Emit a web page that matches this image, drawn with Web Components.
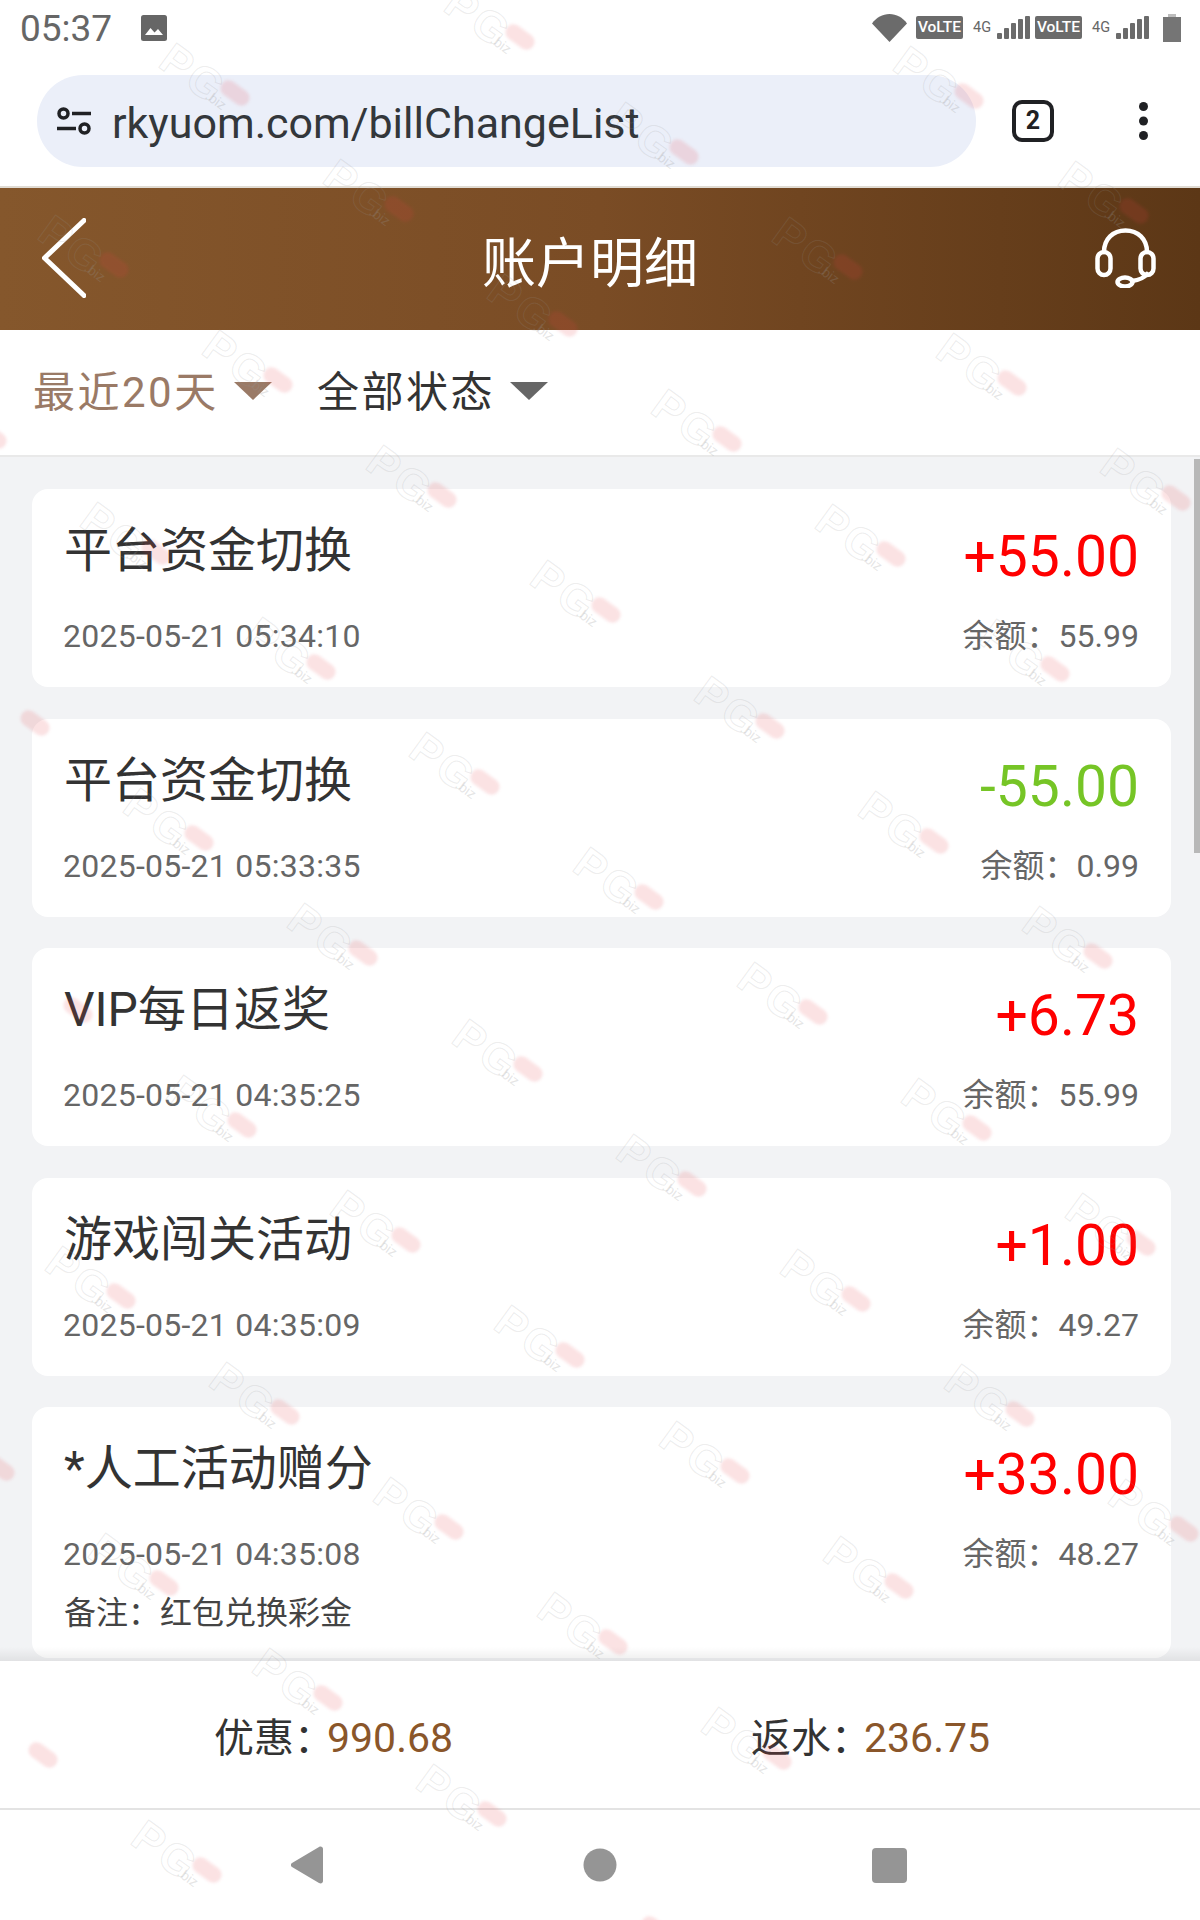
<!DOCTYPE html>
<html lang="zh">
<head>
<meta charset="utf-8">
<title>账户明细</title>
<style>
  html, body { margin: 0; padding: 0; background: #fff; }
  body {
    position: relative;
    width: 1200px;
    height: 1920px;
    overflow: hidden;
    display: flex;
    flex-direction: column;
    font-family: Roboto, "Noto Sans CJK SC", sans-serif;
  }
</style>
</head>
<body>
  <status-bar></status-bar>
  <browser-bar>rkyuom.com/billChangeList</browser-bar>
  <page-header>账户明细</page-header>
  <filter-bar></filter-bar>
  <bill-list>
    <bill-card>
      平台资金切换
      <span slot="amount">+55.00</span>
      <span slot="date">2025-05-21 05:34:10</span>
      <span slot="balance">余额：55.99</span>
    </bill-card>
    <bill-card kind="minus">
      平台资金切换
      <span slot="amount">-55.00</span>
      <span slot="date">2025-05-21 05:33:35</span>
      <span slot="balance">余额：0.99</span>
    </bill-card>
    <bill-card>
      VIP每日返奖
      <span slot="amount">+6.73</span>
      <span slot="date">2025-05-21 04:35:25</span>
      <span slot="balance">余额：55.99</span>
    </bill-card>
    <bill-card>
      游戏闯关活动
      <span slot="amount">+1.00</span>
      <span slot="date">2025-05-21 04:35:09</span>
      <span slot="balance">余额：49.27</span>
    </bill-card>
    <bill-card>
      *人工活动赠分
      <span slot="amount">+33.00</span>
      <span slot="date">2025-05-21 04:35:08</span>
      <span slot="balance">余额：48.27</span>
      <span slot="note">备注：红包兑换彩金</span>
    </bill-card>
  </bill-list>
  <bill-summary></bill-summary>
  <nav-keys></nav-keys>
  <water-mark></water-mark>

<script>
class StatusBar extends HTMLElement {
    connectedCallback() {
        const shadow = this.attachShadow({ mode: "open" });
        const mobile = `
            <span class="volte">VoLTE</span>
            <span class="net">4G</span>
            <svg class="bars" width="33" height="23" viewBox="0 0 33 23" fill="#6b6b6b">
                <rect x="0" y="17" width="5" height="6" rx="1"/>
                <rect x="7" y="12" width="5" height="11" rx="1"/>
                <rect x="14" y="7" width="5" height="16" rx="1"/>
                <rect x="21" y="3" width="5" height="20" rx="1"/>
                <rect x="28" y="0" width="5" height="23" rx="1"/>
            </svg>`;
        shadow.innerHTML = `
            <style>
                :host {
                    display: flex;
                    align-items: center;
                    height: 58px;
                    padding: 0 19px 0 20px;
                    color: #666;
                    flex: none;
                }
                .time { font-size: 37px; line-height: 58px; width: 121px; }
                .pic { margin-top: -2px; }
                .right { margin: -3px 0 0 auto; display: flex; align-items: center; }
                .wifi { margin-right: 4px; }
                .volte {
                    width: 47px;
                    height: 23px;
                    margin-left: 5px;
                    border-radius: 2px;
                    background: #6b6b6b;
                    color: #fff;
                    font-size: 15.5px;
                    font-weight: 500;
                    line-height: 23px;
                    text-align: center;
                }
                .net { width: 18px; margin: 0 6px 0 10px; font-size: 14.5px; }
                .batt { margin-left: 14px; }
            </style>
            <span class="time">05:37</span>
            <svg class="pic" width="26" height="26" viewBox="0 0 26 26">
                <rect width="26" height="26" rx="2.5" fill="#666"/>
                <path d="M4 20l5.5-7 4 4.5 3.5-3.5 5 6z" fill="#fff"/>
            </svg>
            <div class="right">
                <svg class="wifi" width="35" height="28" viewBox="0 0 35 28"><path d="M0 9.5C4.500 3.500 10.500 0 17.500 0S30.500 3.500 35 9.500L17.500 28z" fill="#6b6b6b"/></svg>
                ${mobile}
                ${mobile}
                <svg class="batt" width="18" height="28" viewBox="0 0 18 28">
                    <rect x="5" y="0" width="8" height="3" fill="#bdbdbd"/>
                    <rect x="0" y="3" width="18" height="25" fill="#757575"/>
                </svg>
            </div>
        `;
    }
}

class BrowserBar extends HTMLElement {
    connectedCallback() {
        const shadow = this.attachShadow({ mode: "open" });
        shadow.innerHTML = `
            <style>
                :host {
                    display: flex;
                    align-items: center;
                    height: 130px;
                    padding: 0 0 0 37px;
                    box-sizing: border-box;
                    border-bottom: 2px solid #e0dbd3;
                    flex: none;
                }
                .pill {
                    display: flex;
                    align-items: center;
                    width: 939px;
                    height: 92px;
                    margin-top: -2px;
                    padding-left: 20px;
                    box-sizing: border-box;
                    border-radius: 46px;
                    background: #ebeff9;
                    color: #33373b;
                    font-size: 43px;
                }
                .url { margin-left: 20px; padding-top: 4px; }
                .tabs {
                    margin: -2px 0 0 36px;
                    width: 42px;
                    height: 42px;
                    box-sizing: border-box;
                    border: 4px solid #202124;
                    border-radius: 10px;
                    color: #202124;
                    font-size: 25px;
                    font-weight: 700;
                    line-height: 34px;
                    text-align: center;
                }
                .menu { margin: -2px 0 0 85px; }
            </style>
            <div class="pill">
                <svg width="35" height="28" viewBox="0 0 35 28" fill="none" stroke="#202124" stroke-width="3.500">
                    <circle cx="6.500" cy="6.500" r="4.500"/>
                    <path d="M15 6.500h19M0 21.500h19"/>
                    <circle cx="27.500" cy="21.500" r="4.500"/>
                </svg>
                <span class="url"><slot></slot></span>
            </div>
            <div class="tabs">2</div>
            <svg class="menu" width="9" height="38" viewBox="0 0 9 38" fill="#202124">
                <circle cx="4.500" cy="4.500" r="4.500"/>
                <circle cx="4.500" cy="19" r="4.500"/>
                <circle cx="4.500" cy="33.500" r="4.500"/>
            </svg>
        `;
    }
}

class PageHeader extends HTMLElement {
    connectedCallback() {
        const shadow = this.attachShadow({ mode: "open" });
        shadow.innerHTML = `
            <style>
                :host {
                    display: flex;
                    align-items: center;
                    height: 142px;
                    padding: 0 44px 0 42px;
                    box-sizing: border-box;
                    background: linear-gradient(90deg, #85572c 0%, #7a4c25 50%, #5c3716 100%);
                    flex: none;
                }
                .back { flex: none; margin-top: -2px; }
                .head { margin-top: -3px; }
                .title {
                    flex: 1;
                    text-align: center;
                    color: #fff;
                    font-size: 54px;
                    font-weight: 400;
                    margin-left: -1px;
                }
            </style>
            <svg class="back" width="44" height="80" viewBox="0 0 44 80" fill="none" stroke="#fff" stroke-width="5" stroke-linecap="round" stroke-linejoin="round">
                <path d="M42 2.500L2.500 40 42 77.500"/>
            </svg>
            <div class="title"><slot></slot></div>
            <svg class="head" width="61" height="60" viewBox="0 0 61 60" fill="none" stroke="#fff" stroke-width="4.500" stroke-linecap="round">
                <path d="M9 24C9 11 18 2.500 30.500 2.500S52 11 52 24"/>
                <rect x="2.500" y="24" width="13" height="23" rx="6.500"/>
                <rect x="45.500" y="24" width="13" height="23" rx="6.500"/>
                <ellipse cx="30" cy="54" rx="7.500" ry="4.500"/>
                <path d="M37 53c7-1 12-3 15-7"/>
            </svg>
        `;
    }
}

class FilterBar extends HTMLElement {
    connectedCallback() {
        const shadow = this.attachShadow({ mode: "open" });
        shadow.innerHTML = `
            <style>
                :host {
                    display: flex;
                    align-items: center;
                    height: 127px;
                    padding: 0 0 8px 33px;
                    box-sizing: border-box;
                    border-bottom: 2px solid #e9e9e9;
                    font-size: 42px;
                    letter-spacing: 2.5px;
                    flex: none;
                }
                .item { display: flex; align-items: center; }
                .on { color: #9a7a66; width: 284px; }
                .off { color: #333; }
                .arrow {
                    width: 0;
                    height: 0;
                    margin: 4px 0 0 15px;
                    border-style: solid;
                    border-width: 18px 19px 0;
                    border-color: #666 transparent transparent;
                }
                .on .arrow { border-top-color: #9a7a66; }
            </style>
            <div class="item on">最近20天<span class="arrow"></span></div>
            <div class="item off">全部状态<span class="arrow"></span></div>
        `;
    }
}

class BillList extends HTMLElement {
    connectedCallback() {
        const shadow = this.attachShadow({ mode: "open" });
        shadow.innerHTML = `
            <style>
                :host {
                    display: block;
                    position: relative;
                    flex: 1;
                    min-height: 0;
                    overflow: hidden;
                    padding: 32px 29px 0 32px;
                    background: #f2f3f5;
                }
                .thumb {
                    position: absolute;
                    top: 2px;
                    right: 0;
                    width: 6px;
                    height: 394px;
                    background: #b8b8b8;
                }
                .fade {
                    position: absolute;
                    left: 0;
                    right: 0;
                    bottom: 0;
                    height: 14px;
                    background: linear-gradient(rgba(0,0,0,0), rgba(0,0,0,.07));
                }
            </style>
            <slot></slot>
            <div class="thumb"></div>
            <div class="fade"></div>
        `;
    }
}

class BillCard extends HTMLElement {
    connectedCallback() {
        const shadow = this.attachShadow({ mode: "open" });
        shadow.innerHTML = `
            <style>
                :host {
                    display: block;
                    min-height: 198px;
                    margin-bottom: 31.500px;
                    padding: 30px 32px 26px;
                    box-sizing: border-box;
                    border-radius: 16px;
                    background: #fff;
                }
                .row { display: flex; justify-content: space-between; }
                .title { color: #333; font-size: 48px; line-height: 64px; }
                .amount { color: #f00; font-size: 57px; line-height: 76px; }
                :host([kind="minus"]) .amount { color: #76c526; }
                .meta { margin-top: 22px; color: #666; font-size: 32px; line-height: 38px; }
                .date { letter-spacing: .25px; margin-left: -1px; }
                .note { margin-top: 21px; color: #444; font-size: 32px; line-height: 38px; }
            </style>
            <div class="row">
                <div class="title"><slot></slot></div>
                <div class="amount"><slot name="amount"></slot></div>
            </div>
            <div class="row meta">
                <div class="date"><slot name="date"></slot></div>
                <div><slot name="balance"></slot></div>
            </div>
            <div class="note"><slot name="note"></slot></div>
        `;
        if (!this.querySelector('[slot="note"]')) {
            shadow.querySelector('.note').remove();
        }
    }
}

class BillSummary extends HTMLElement {
    connectedCallback() {
        const shadow = this.attachShadow({ mode: "open" });
        shadow.innerHTML = `
            <style>
                :host {
                    display: grid;
                    grid-template-columns: 537px auto;
                    align-items: center;
                    height: 149px;
                    padding: 0 0 0 214px;
                    box-sizing: border-box;
                    border-bottom: 2px solid #e3e3e3;
                    background: #fff;
                    color: #333;
                    font-size: 40px;
                    flex: none;
                }
                b { font-weight: 400; font-size: 41px; margin-left: -7px; color: #8a562a; }
            </style>
            <div>优惠：<b>990.68</b></div>
            <div>返水：<b>236.75</b></div>
        `;
    }
}

class NavKeys extends HTMLElement {
    connectedCallback() {
        const shadow = this.attachShadow({ mode: "open" });
        shadow.innerHTML = `
            <style>
                :host {
                    display: flex;
                    align-items: center;
                    height: 110px;
                    padding: 0 0 0 291px;
                    box-sizing: border-box;
                    flex: none;
                }
                svg { display: block; }
                .home { margin-left: 260px; }
                .recent { margin-left: 255px; }
            </style>
            <svg width="32" height="38" viewBox="0 0 32 38" fill="#959595">
                <path d="M1 17L28 1c2-1 4 0 4 2v32c0 2-2 3-4 2L1 21c-1.500-1-1.500-3 0-4z"/>
            </svg>
            <svg class="home" width="34" height="34" viewBox="0 0 34 34" fill="#959595"><circle cx="17" cy="17" r="16.500"/></svg>
            <svg class="recent" width="35" height="35" viewBox="0 0 35 35" fill="#959595"><rect width="35" height="35" rx="4"/></svg>
        `;
    }
}

// the repeated PG.biz stamp lying over the whole screenshot
class WaterMark extends HTMLElement {
    connectedCallback() {
        const shadow = this.attachShadow({ mode: "open" });
        let stamps = '';
        for (let i = -8; i <= 8; i++) {
            for (let j = -4; j <= 18; j++) {
                const x = 520 - 285.3 * i + 164.1 * j;
                const y = 37 + 56.3 * i + 115.2 * j;
                if (x < -60 || x > 1280 || y < -60 || y > 1980) continue;
                // the reference has none over the right of the footer
                if (y > 1660 && x > 800) continue;
                // no letters on a stamp the edge would cut, only its red mark
                const whole = x > 105 && x < 1185 && y > 34 && y < 1895;
                const logo = whole ? '<span class="logo">PG</span><span class="biz">.biz</span>' : '';
                stamps += `
                    <div class="stamp" style="left:${x}px;top:${y}px">
                        ${logo}
                        <span class="pill"></span>
                    </div>`;
            }
        }
        shadow.innerHTML = `
            <style>
                :host {
                    position: absolute;
                    inset: 0;
                    overflow: hidden;
                    pointer-events: none;
                }
                .stamp {
                    position: absolute;
                    width: 0;
                    height: 0;
                    transform: rotate(36deg);
                }
                .pill {
                    position: absolute;
                    left: -16px;
                    top: -8px;
                    width: 32px;
                    height: 16px;
                    border-radius: 8px;
                    background: rgba(226, 60, 70, .15);
                    filter: blur(1.5px);
                }
                .logo {
                    position: absolute;
                    right: 10px;
                    top: -13px;
                    white-space: nowrap;
                    font-family: "Liberation Sans", sans-serif;
                    font-size: 44px;
                    font-weight: 700;
                    line-height: 44px;
                    letter-spacing: 3px;
                    color: transparent;
                    -webkit-text-stroke: 1px rgba(150, 150, 150, .18);
                }
                .biz {
                    position: absolute;
                    left: -22px;
                    top: 9px;
                    font-family: "Liberation Sans", sans-serif;
                    font-size: 14px;
                    line-height: 16px;
                    color: rgba(150, 150, 150, .25);
                }
            </style>
            ${stamps}
        `;
    }
}

customElements.define('status-bar', StatusBar);
customElements.define('browser-bar', BrowserBar);
customElements.define('page-header', PageHeader);
customElements.define('filter-bar', FilterBar);
customElements.define('bill-list', BillList);
customElements.define('bill-card', BillCard);
customElements.define('bill-summary', BillSummary);
customElements.define('nav-keys', NavKeys);
customElements.define('water-mark', WaterMark);
</script>
</body>
</html>
